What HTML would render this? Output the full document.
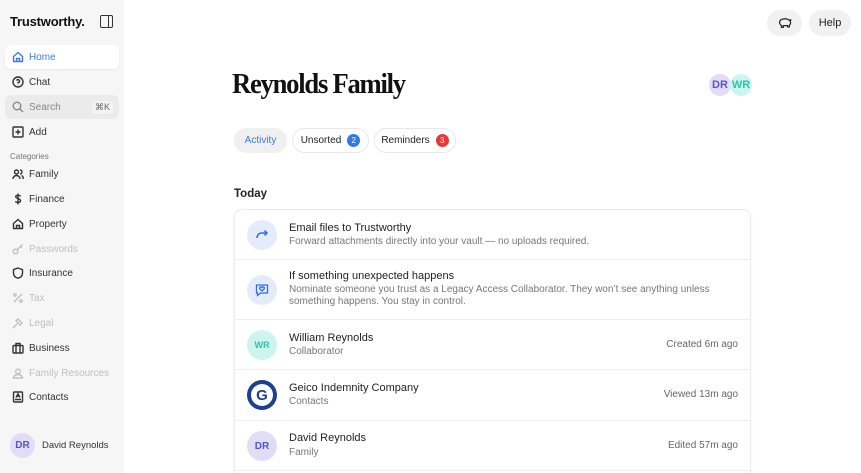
<!DOCTYPE html>
<html><head><style>
*{box-sizing:border-box;margin:0;padding:0}
html,body{width:861px;height:473px;overflow:hidden}
body{font-family:"Liberation Sans",sans-serif;background:#fff;position:relative;color:#222}
.sb{position:absolute;left:0;top:0;width:124px;height:473px;background:#f6f6f6}
.logo{position:absolute;left:10px;top:14px;font-weight:bold;font-size:13px;color:#111;letter-spacing:-.2px}
.col{position:absolute;left:100px;top:15px;width:13px;height:13px;border:1.5px solid #333;border-radius:2px}
.col:after{content:"";position:absolute;right:3px;top:0;width:1.5px;height:100%;background:#333}
.nav{position:absolute;left:5px;width:114px;height:24px;border-radius:6px;font-size:10px;display:flex;align-items:center;padding-left:24px;color:#333}
.nav svg{position:absolute;left:7px;top:6px;width:12px;height:12px;fill:none;stroke:currentColor;stroke-width:1.4}
.dim{color:#c0c0c0}
.cat{position:absolute;left:10px;top:152px;font-size:8px;color:#777}
.av{border-radius:50%;display:flex;align-items:center;justify-content:center;font-weight:bold;font-size:11px}
h1{position:absolute;left:232px;top:69px;font-family:"Liberation Serif",serif;font-size:28px;font-weight:bold;letter-spacing:-1.3px;color:#111;transform:scaleX(.95);transform-origin:left}
.tab{position:absolute;top:128px;height:25px;border-radius:13px;border:1px solid #e8e8e8;font-size:10px;display:flex;align-items:center;justify-content:center;gap:6px;white-space:nowrap}
.badge{flex:0 0 13px;width:13px;height:13px;border-radius:50%;color:#fff;font-size:8px;display:flex;align-items:center;justify-content:center}
.card{position:absolute;left:234px;top:209px;width:517px;height:270px;border:1px solid #ececec;border-radius:8px;box-shadow:0 1px 3px rgba(0,0,0,.05)}
.row{position:absolute;left:0;right:0;border-bottom:1px solid #efefef}
.row .ic{position:absolute;left:12px;width:30px;height:30px}
.t{position:absolute;left:54px;font-size:11px;color:#222}
.s{position:absolute;left:54px;font-size:10px;color:#777}
.r{position:absolute;right:12px;font-size:10px;color:#666}
</style></head><body>
<div class="sb">
<div class="logo">Trustworthy.</div><div class="col"></div>
<div class="nav" style="top:45px;background:#fff;color:#3b7be0;box-shadow:0 1px 2px rgba(0,0,0,.06)"><svg viewBox="0 0 12 12"><path d="M1.5 5.5L6 1.5l4.5 4v5h-9z M4.5 10.5V7.5h3v3"/></svg>Home</div>
<div class="nav" style="top:70px"><svg viewBox="0 0 12 12"><circle cx="6" cy="6" r="5"/><path d="M4.6 4.6a1.5 1.5 0 1 1 1.4 2v.8M6 8.8v.3"/></svg>Chat</div>
<div class="nav" style="top:95px;background:#ebebeb;color:#888"><svg viewBox="0 0 12 12"><circle cx="5" cy="5" r="3.8"/><path d="M8 8l3 3"/></svg>Search<span style="position:absolute;right:6px;font-size:9px;background:#f3f3f3;padding:1px 3px;border-radius:3px;color:#666">⌘K</span></div>
<div class="nav" style="top:120px"><svg viewBox="0 0 12 12"><rect x="1" y="1" width="10" height="10" rx="1"/><path d="M6 3.5v5M3.5 6h5"/></svg>Add</div>
<div class="cat">Categories</div>
<div class="nav" style="top:162px"><svg viewBox="0 0 12 12"><circle cx="4.5" cy="4" r="2"/><path d="M1 11a3.5 3.5 0 0 1 7 0M8 2a2 2 0 0 1 0 4M9.5 7.5A3 3 0 0 1 11 11"/></svg>Family</div>
<div class="nav" style="top:187px"><svg viewBox="0 0 12 12"><path d="M6 0.5v11M8.5 3.5C8 2 4 1.8 3.7 3.6S8.5 5.5 8.5 7.7 4 10 3.4 8.3"/></svg>Finance</div>
<div class="nav" style="top:212px"><svg viewBox="0 0 12 12"><path d="M1.5 5.5L6 1.5l4.5 4v5h-9z M4.5 10.5V7.5h3v3"/></svg>Property</div>
<div class="nav dim" style="top:237px"><svg viewBox="0 0 12 12"><circle cx="3.5" cy="8.5" r="2.3"/><path d="M5.2 6.8L10.5 1.5M8.5 3.5l1.3 1.3"/></svg>Passwords</div>
<div class="nav" style="top:261px"><svg viewBox="0 0 12 12"><path d="M6 1l4.5 1.6v3.6c0 2.6-2 4.3-4.5 5-2.5-.7-4.5-2.4-4.5-5V2.6z"/></svg>Insurance</div>
<div class="nav dim" style="top:286px"><svg viewBox="0 0 12 12"><path d="M10 2L2 10"/><circle cx="3" cy="3" r="1.2"/><circle cx="9" cy="9" r="1.2"/></svg>Tax</div>
<div class="nav dim" style="top:311px"><svg viewBox="0 0 12 12"><path d="M6 2l4 4-2 2-4-4zM5 7l-4 4"/></svg>Legal</div>
<div class="nav" style="top:336px"><svg viewBox="0 0 12 12"><rect x="1" y="3.5" width="10" height="7.5" rx="1"/><path d="M4 3.5V1.5h4v2M4 3.5v7.5M8 3.5v7.5"/></svg>Business</div>
<div class="nav dim" style="top:361px"><svg viewBox="0 0 12 12"><circle cx="6" cy="4.5" r="2.3"/><path d="M1.5 11c0-2 2-3.5 4.5-3.5s4.5 1.5 4.5 3.5z"/></svg>Family Resources</div>
<div class="nav" style="top:385px"><svg viewBox="0 0 12 12"><rect x="1.5" y="1" width="9" height="10" rx="1"/><path d="M4 6.5L6 2.8 8 6.5M4.8 5.2h2.4M3 8.5h6"/></svg>Contacts</div>
<div class="av" style="position:absolute;left:10px;top:433px;width:25px;height:25px;background:#e1ddf7;color:#5a54c9;font-size:10px">DR</div>
<div style="position:absolute;left:42px;top:440px;font-size:9.5px;color:#333">David Reynolds</div>
</div>

<div style="position:absolute;left:767px;top:10px;width:35px;height:26px;border-radius:13px;background:#f1f1f1"><svg viewBox="0 0 16 16" width="14" height="14" style="position:absolute;left:11px;top:6px" fill="none" stroke="#222" stroke-width="1.4"><path d="M2 6c1-3 8-4 11-1l1.5-.5-.5 2c1 1.5 0 3.5-1 4v2h-2v-1.5H6V13H4v-2C2 9.5 1.5 7.5 2 6z"/></svg></div>
<div style="position:absolute;left:809px;top:10px;width:42px;height:26px;border-radius:13px;background:#f1f1f1;font-size:11px;display:flex;align-items:center;justify-content:center">Help</div>

<h1>Reynolds Family</h1>
<div class="av" style="position:absolute;left:709px;top:74px;width:22px;height:22px;background:#e1ddf7;color:#5a54c9">DR</div>
<div class="av" style="position:absolute;left:730px;top:74px;width:22px;height:22px;background:#cdf5ef;color:#2cc6a8">WR</div>

<div class="tab" style="left:234px;width:53px;background:#f0f0f0;border-color:#f0f0f0;color:#3b7be0">Activity</div>
<div class="tab" style="left:292px;width:77px">Unsorted<span class="badge" style="background:#2f7ae5">2</span></div>
<div class="tab" style="left:374px;width:82px">Reminders<span class="badge" style="background:#e53935">3</span></div>

<div style="position:absolute;left:234px;top:188px;font-size:11.5px;font-weight:bold;color:#222">Today</div>

<div class="card">
<div class="row" style="top:0;height:50px"><div class="ic av" style="top:10px;background:#e4ecfb"><svg width="14" height="14" viewBox="0 0 14 14" fill="none" stroke="#2f6fe0" stroke-width="1.5"><path d="M2 10c0-3 2-5 5-5h5M9.5 2.5L12 5 9.5 7.5"/></svg></div><div class="t" style="top:12px">Email files to Trustworthy</div><div class="s" style="top:26px">Forward attachments directly into your vault — no uploads required.</div></div>
<div class="row" style="top:50px;height:60px"><div class="ic av" style="top:15px;background:#e4ecfb"><svg width="14" height="14" viewBox="0 0 14 14" fill="none" stroke="#2f6fe0" stroke-width="1.3"><path d="M1.5 2h11v8h-7l-3 2.5V10h-1z"/><path d="M7 8L4.8 5.8a1.1 1.1 0 0 1 2.2-1.3 1.1 1.1 0 0 1 2.2 1.3z"/></svg></div><div class="t" style="top:10px">If something unexpected happens</div><div class="s" style="top:24px;line-height:12px;width:440px">Nominate someone you trust as a Legacy Access Collaborator. They won’t see anything unless something happens. You stay in control.</div></div>
<div class="row" style="top:110px;height:50px"><div class="ic av" style="top:10px;background:#cdf5ef;color:#2cc6a8;font-size:9px">WR</div><div class="t" style="top:12px">William Reynolds</div><div class="s" style="top:26px">Collaborator</div><div class="r" style="top:19px">Created 6m ago</div></div>
<div class="row" style="top:160px;height:51px"><div class="ic av" style="top:10px;background:#1c3f8f"><div style="width:22px;height:22px;border-radius:50%;background:#fff;display:flex;align-items:center;justify-content:center;color:#1c3f8f;font-weight:bold;font-size:15px">G</div></div><div class="t" style="top:12px">Geico Indemnity Company</div><div class="s" style="top:26px">Contacts</div><div class="r" style="top:19px">Viewed 13m ago</div></div>
<div class="row" style="top:211px;height:50px"><div class="ic av" style="top:10px;background:#e1ddf7;color:#5a54c9;font-size:10px">DR</div><div class="t" style="top:11px">David Reynolds</div><div class="s" style="top:26px">Family</div><div class="r" style="top:19px">Edited 57m ago</div></div>
</div>
</body></html>
